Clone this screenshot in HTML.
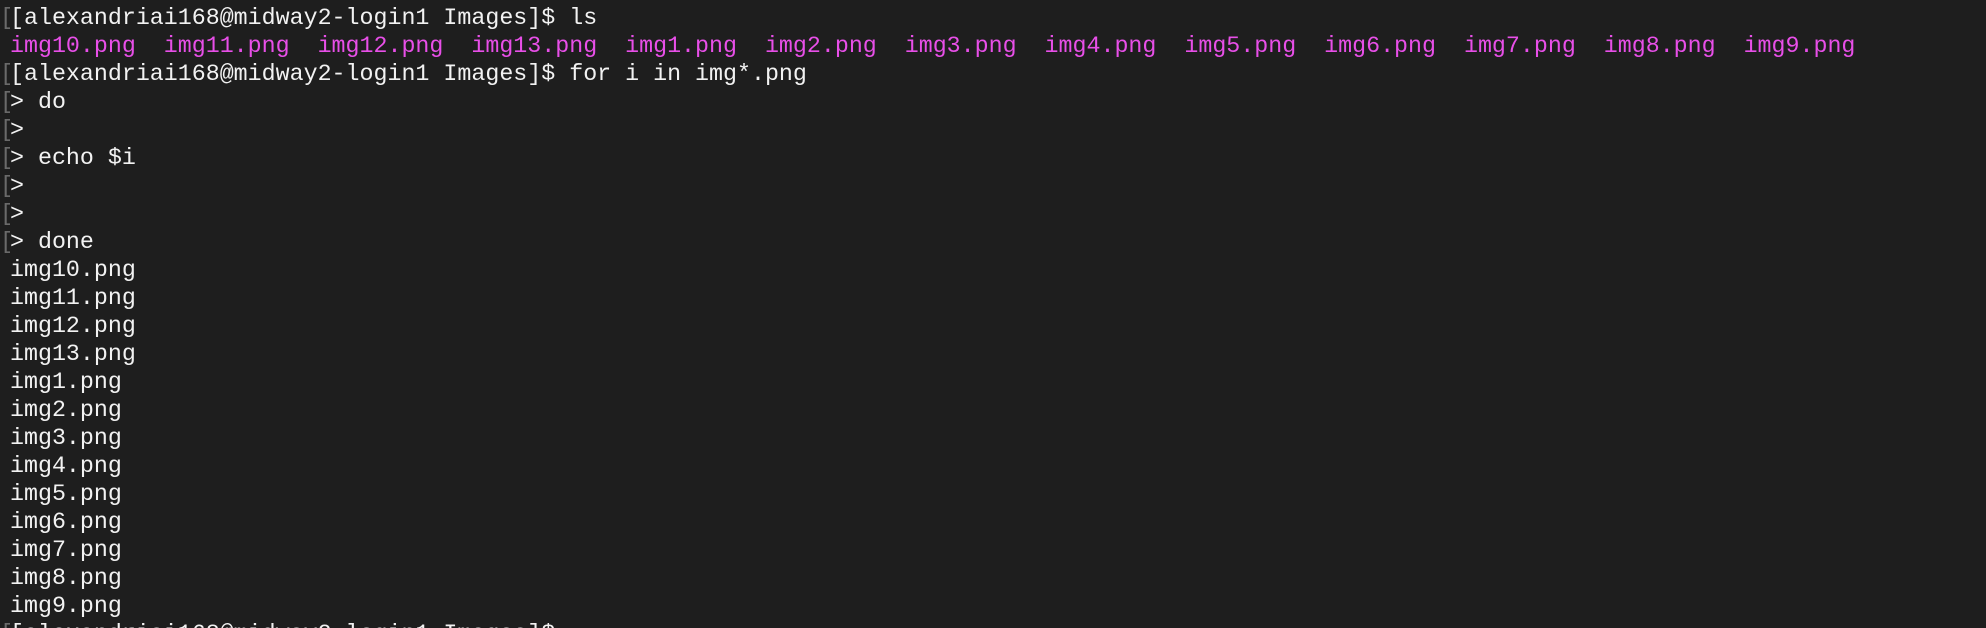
<!DOCTYPE html>
<html><head><meta charset="utf-8"><style>
html,body{margin:0;padding:0;background:#1e1e1e;width:1986px;height:628px;overflow:hidden}
pre{margin:0;padding:4px 0 0 0;font-family:"Liberation Mono",monospace;font-size:23.3px;line-height:28px;color:#f2f2f2;white-space:pre}
.b{color:#6a6a6a;display:inline-block;width:10px;overflow:hidden;vertical-align:top}
.m{color:#e84fe8}
</style></head><body><pre><span class="b">[</span>[alexandriai168@midway2-login1 Images]$ ls
<span class="b"> </span><span class="m">img10.png  img11.png  img12.png  img13.png  img1.png  img2.png  img3.png  img4.png  img5.png  img6.png  img7.png  img8.png  img9.png</span>
<span class="b">[</span>[alexandriai168@midway2-login1 Images]$ for i in img*.png
<span class="b">[</span>&gt; do
<span class="b">[</span>&gt;
<span class="b">[</span>&gt; echo $i
<span class="b">[</span>&gt;
<span class="b">[</span>&gt;
<span class="b">[</span>&gt; done
<span class="b"> </span>img10.png
<span class="b"> </span>img11.png
<span class="b"> </span>img12.png
<span class="b"> </span>img13.png
<span class="b"> </span>img1.png
<span class="b"> </span>img2.png
<span class="b"> </span>img3.png
<span class="b"> </span>img4.png
<span class="b"> </span>img5.png
<span class="b"> </span>img6.png
<span class="b"> </span>img7.png
<span class="b"> </span>img8.png
<span class="b"> </span>img9.png
<span class="b">[</span>[alexandriai168@midway2-login1 Images]$ 
</pre></body></html>
